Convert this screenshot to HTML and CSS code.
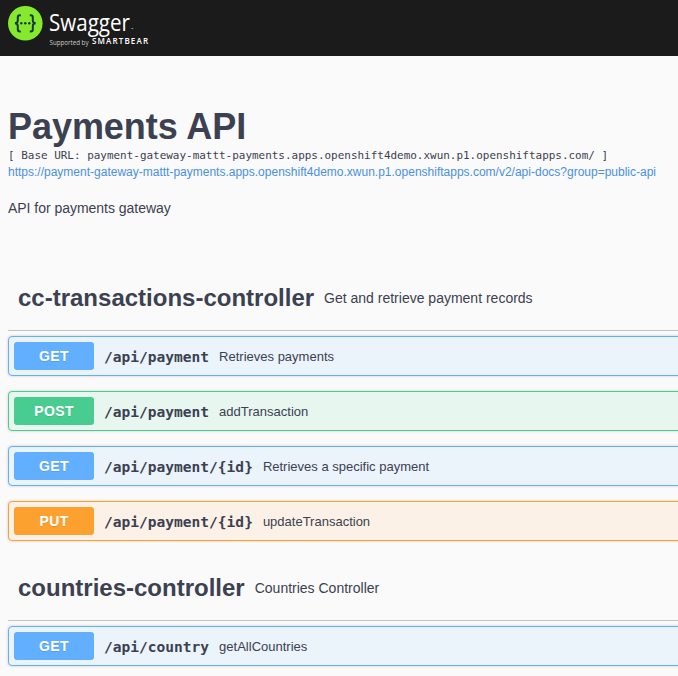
FILE: index.html
```html
<!DOCTYPE html>
<html lang="en">
<head>
<meta charset="utf-8">
<title>Swagger UI</title>
<link rel="stylesheet" href="styles.css">
</head>
<body>
<header class="topbar">
  <svg class="logo" width="160" height="56" viewBox="0 0 160 56" role="img" aria-label="Swagger">
    <circle cx="25.3" cy="23.3" r="17.3" fill="#85ea2d"/>
    <g fill="none" stroke="#173647" stroke-width="2">
      <path d="M20.800 15.200h-1q-2 0-2 2v3.200q0 2.600-2.800 2.900q2.800 .3 2.800 2.900v3.200q0 2 2 2h1"/>
      <path d="M29.800 15.200h1q2 0 2 2v3.200q0 2.600 2.800 2.900q-2.800 .3-2.800 2.900v3.200q0 2-2 2h-1"/>
    </g>
    <g fill="#173647"><circle cx="21.300" cy="23.300" r="1.200"/><circle cx="25.300" cy="23.300" r="1.200"/><circle cx="29.300" cy="23.300" r="1.200"/></g>
    <text class="logo-name" x="49" y="30.500" textLength="81" lengthAdjust="spacingAndGlyphs">Swagger</text>
    <text class="logo-tm" x="131" y="30">™</text>
    <text class="logo-by" x="49.500" y="44.500" textLength="39" lengthAdjust="spacingAndGlyphs">Supported by</text>
    <text class="logo-brand" x="92" y="44.300" textLength="56">SMARTBEAR</text>
  </svg>
</header>
<main class="content">
  <section class="info">
    <h1 class="title">Payments API</h1>
    <pre class="base-url">[ Base URL: payment-gateway-mattt-payments.apps.openshift4demo.xwun.p1.openshiftapps.com/ ]</pre>
    <a class="link">https://payment-gateway-mattt-payments.apps.openshift4demo.xwun.p1.openshiftapps.com/v2/api-docs?group=public-api</a>
    <p class="description">API for payments gateway</p>
  </section>
  <section class="tag-section">
    <div class="tag"><h2 class="tag-name">cc-transactions-controller</h2><span class="tag-text">Get and retrieve payment records</span></div>
    <div class="op get"><span class="method">GET</span><span class="path">/api/payment</span><span class="summary">Retrieves payments</span></div>
    <div class="op post"><span class="method">POST</span><span class="path">/api/payment</span><span class="summary">addTransaction</span></div>
    <div class="op get"><span class="method">GET</span><span class="path">/api/payment/{id}</span><span class="summary">Retrieves a specific payment</span></div>
    <div class="op put"><span class="method">PUT</span><span class="path">/api/payment/{id}</span><span class="summary">updateTransaction</span></div>
  </section>
  <section class="tag-section">
    <div class="tag"><h2 class="tag-name">countries-controller</h2><span class="tag-text">Countries Controller</span></div>
    <div class="op get"><span class="method">GET</span><span class="path">/api/country</span><span class="summary">getAllCountries</span></div>
  </section>
</main>
</body>
</html>
```
FILE: styles.css
```css
* { box-sizing: border-box; }
html { overflow: hidden; }
body {
  margin: 0;
  background: #fafafa;
  color: #3b4151;
  font-family: "Liberation Sans", Arial, sans-serif;
}
.topbar { height: 56px; background: #1b1b1b; }
.logo { display: block; }
.logo text { fill: #fff; font-family: "Open Sans", sans-serif; }
.logo .logo-name { font-size: 23px; }
.logo .logo-tm { font-size: 3px; }
.logo .logo-by { font-size: 6.5px; fill: #ccc; }
.logo .logo-brand { font-size: 8px; font-weight: 600; }

.content { width: 700px; padding-left: 8px; }
.info { height: 209px; padding-top: 50px; }
.title { margin: 0; font-size: 36px; line-height: 41px; font-weight: 700; letter-spacing: -.05px; }
.base-url {
  margin: 1px 0 0;
  font: 10.960px/16px "DejaVu Sans Mono", monospace;
}
.link { display: block; font-size: 12px; line-height: 17px; color: #4990e2; white-space: nowrap; }
.description { margin: 19px 0 0; font-size: 14px; line-height: 16px; letter-spacing: -.03px; }

.tag {
  display: flex;
  align-items: center;
  height: 66px;
  margin-bottom: 5px;
  padding: 0 10px;
  border-bottom: 1px solid rgba(59, 65, 81, .3);
}
.tag-name { margin: 0; font-size: 24px; line-height: 28px; }
.tag-text { padding-left: 10px; font-size: 14px; }
.tag-section + .tag-section { margin-top: -1px; }

.op {
  display: flex;
  align-items: center;
  height: 40px;
  margin-bottom: 15px;
  padding: 5px;
  border: 1px solid;
  border-radius: 4px;
  box-shadow: 0 0 3px rgba(0, 0, 0, .19);
}
.get { border-color: #61affe; background: #ebf3fb; }
.post { border-color: #49cc90; background: #e8f6f0; }
.put { border-color: #fca130; background: #fbf1e6; }
.method {
  width: 80px;
  height: 28px;
  border-radius: 3px;
  color: #fff;
  font-size: 14px;
  line-height: 28px;
  font-weight: 700;
  letter-spacing: .4px;
  text-align: center;
  text-shadow: 0 1px 0 rgba(0, 0, 0, .1);
}
.get .method { background: #61affe; }
.post .method { background: #49cc90; }
.put .method { background: #fca130; }
.path {
  padding: 2px 10px 0;
  font: 700 14.560px/18px "DejaVu Sans Mono", monospace;
}
.summary { font-size: 13px; }
```
